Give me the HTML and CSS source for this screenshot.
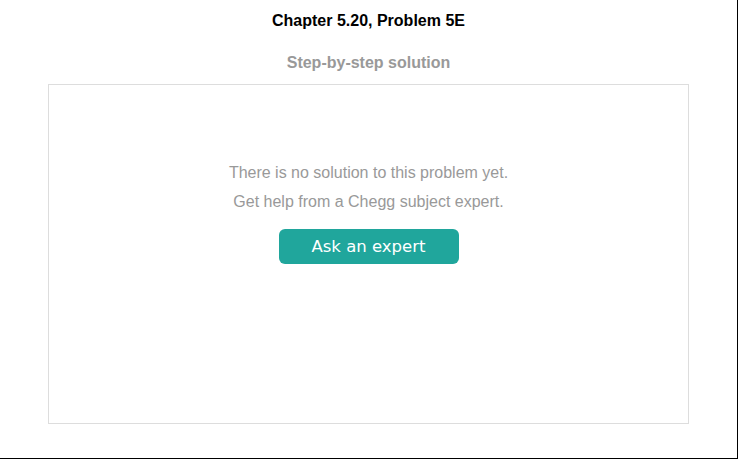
FILE: index.html
```html
<!DOCTYPE html>
<html>
<head>
<meta charset="utf-8">
<link rel="stylesheet" href="styles.css">
</head>
<body>
<div class="page">
  <h1 class="title">Chapter 5.20, Problem 5E</h1>
  <h2 class="subtitle">Step-by-step solution</h2>
  <div class="panel">
    <p class="msg">There is no solution to this problem yet.</p>
    <p class="msg">Get help from a Chegg subject expert.</p>
    <button class="ask">Ask an expert</button>
  </div>
</div>
</body>
</html>
```
FILE: styles.css
```css
html, body {
  margin: 0;
  padding: 0;
  background: #fff;
}
.page {
  box-sizing: border-box;
  width: 738px;
  height: 459px;
  border-right: 1px solid #000;
  border-bottom: 1px solid #000;
  display: flex;
  flex-direction: column;
  align-items: center;
  font-family: "Liberation Sans", Arial, sans-serif;
}
.title {
  margin: 12px 0 0;
  font-size: 16px;
  line-height: 18px;
  font-weight: bold;
  color: #000;
}
.subtitle {
  margin: 24px 0 0;
  font-size: 16px;
  line-height: 18px;
  font-weight: bold;
  color: #999;
}
.panel {
  box-sizing: border-box;
  margin: 12px 0 0;
  width: 641px;
  height: 340px;
  border: 1px solid #ddd;
  display: flex;
  flex-direction: column;
  align-items: center;
  padding-top: 73px;
}
.msg {
  margin: 0;
  font-size: 16px;
  line-height: 29px;
  color: #999;
}
.ask {
  margin-top: 13px;
  width: 180px;
  height: 35px;
  border: none;
  border-radius: 6px;
  background: #20a69c;
  color: #fff;
  font-family: "DejaVu Sans", Tahoma, sans-serif;
  font-size: 16.5px;
  padding: 0;
  cursor: pointer;
}
```
